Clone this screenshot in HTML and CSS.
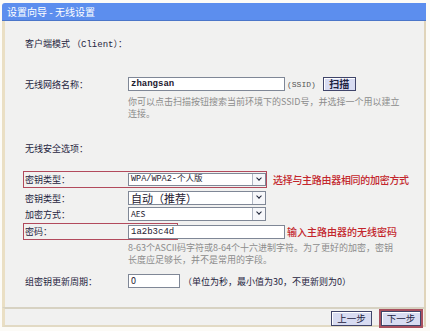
FILE: index.html
```html
<!DOCTYPE html>
<html lang="zh">
<head>
<meta charset="utf-8">
<link rel="stylesheet" href="styles.css">
</head>
<body>
<div class="window">
  <div class="titlebar">设置向导 - 无线设置</div>
  <div class="panel">
    <div class="mode">客户端模式 <span class="mono">（Client）</span>：</div>

    <div class="row r-ssid">
      <div class="label">无线网络名称：</div>
      <div class="field">
        <span class="input w-long mono bold">zhangsan</span>
        <span class="ssid mono">(SSID)</span>
        <span class="btn scan">扫描</span>
      </div>
    </div>
    <div class="help help1">你可以点击扫描按钮搜索当前环境下的SSID号，并选择一个用以建立<br>连接。</div>

    <div class="section">无线安全选项：</div>

    <div class="row r-type">
      <div class="hlbox hl1"></div>
      <div class="label">密钥类型：</div>
      <div class="field">
        <span class="select w-sel mono">WPA/WPA2-个人版<i class="arrow"></i></span>
        <span class="note">选择与主路由器相同的加密方式</span>
      </div>
    </div>
    <div class="row r-sel r-sel1">
      <div class="label">密钥类型：</div>
      <div class="field">
        <span class="select w-sel big">自动（推荐）<i class="arrow"></i></span>
      </div>
    </div>
    <div class="row r-sel r-sel2">
      <div class="label">加密方式：</div>
      <div class="field">
        <span class="select w-sel small">AES<i class="arrow"></i></span>
      </div>
    </div>
    <div class="row r-pass">
      <div class="hlbox hl2"></div>
      <div class="label">密码：</div>
      <div class="field">
        <span class="input w-long mono">1a2b3c4d</span>
        <span class="note note2">输入主路由器的无线密码</span>
      </div>
    </div>
    <div class="help help2">8-63个ASCII码字符或8-64个十六进制字符。为了更好的加密，密钥<br>长度应足够长，并不是常用的字段。</div>

    <div class="row r-period">
      <div class="label">组密钥更新周期：</div>
      <div class="field">
        <span class="input w-short small">0</span>
        <span class="unit">（单位为秒，最小值为30，不更新则为0）</span>
      </div>
    </div>
  </div>
  <div class="footer">
    <span class="btn step">上一步</span>
    <span class="btn step next">下一步</span>
  </div>
</div>
</body>
</html>
```
FILE: styles.css
```css
* { box-sizing: border-box; }
html, body { margin: 0; padding: 0; background: #fcfbf7; }
body {
  width: 430px; height: 331px; overflow: hidden;
  font-family: "Noto Sans CJK SC", "Noto Sans", sans-serif;
  font-size: 9px; color: #1f2540;
}
.window {
  margin: 3px 0 0 2px;
  width: 424px;
}
.titlebar {
  height: 18px;
  background: #5c8eee;
  border-bottom: 1px solid #4b76c9;
  border-radius: 3px 0 0 0;
  color: #fff;
  font-size: 10px;
  line-height: 17px;
  padding-left: 5px;
  white-space: nowrap;
}
.panel {
  background: #f1f1f0;
  border-left: 3px solid #eadfc4;
  border-right: 2px solid #e0d4ba;
  padding: 13px 0 0 20px;
  height: 286px;
  white-space: nowrap;
}
.mono { font-family: "Liberation Mono", "Noto Sans CJK SC", monospace; }
.bold { font-weight: bold; }
.mode { height: 20px; line-height: 20px; }
.mode .mono { font-size: 9px; }
.row { display: flex; align-items: center; position: relative; }
.label { width: 103px; flex: none; }
.field { display: flex; align-items: center; }
.r-ssid { margin-top: 23px; height: 14px; }
.input, .select {
  display: inline-block; height: 14px; line-height: 12px;
  background: #fff; border: 1px solid #7f8796;
  padding: 0 2px; position: relative; color: #1e2030;
  font-size: 9px;
}
.w-long { width: 157px; }
.w-sel { width: 138px; }
.w-short { width: 52px; }
.ssid { color: #555; margin-left: 2px; font-size: 8px; }
.btn {
  display: inline-block; background: #d8dcf2;
  border: 1px solid #40456a; box-shadow: inset 1px 1px 0 #fff;
  text-align: center; color: #1c2240;
}
.scan { width: 33px; height: 14px; line-height: 12px; margin-left: 7px; font-size: 10px; font-weight: bold; }
.help {
  color: #8c8c8c; font-size: 9px; line-height: 12px;
  margin-left: 103px;
}
.help1 { margin-top: 5px; }
.section { margin-top: 19px; height: 20px; line-height: 20px; }
.hlbox {
  position: absolute; left: -2px; top: 0; height: 17px;
  border: 1px solid #b24a5c; pointer-events: none;
}
.hl1 { width: 244px; }
.hl2 { width: 155px; }
.r-type { margin-top: 12px; height: 17px; }
.r-type .select { height: 13px; line-height: 11px; font-size: 8.5px; }
.arrow {
  position: absolute; right: 0; top: 0; width: 13px; height: 100%;
  border-left: 1px solid #b0b6c2; background: #f6f7fa;
}
.arrow::after {
  content: ""; position: absolute; left: 4px; top: 2px; width: 3px; height: 3px;
  border-right: 1.5px solid #1b2236; border-bottom: 1.5px solid #1b2236;
  transform: rotate(45deg);
}
.note { color: #c3262c; font-size: 10px; margin-left: 7px; letter-spacing: -0.3px; font-weight: 500; }
.note2 { margin-left: 2px; letter-spacing: 0; }
.r-sel { height: 14px; }
.r-sel1 { margin-top: 3px; }
.r-sel2 { margin-top: 2px; }
.r-sel1 .select { font-size: 11px; line-height: 12px; }
.r-sel2 .select { font-size: 8px; }
.r-pass { margin-top: 2px; height: 17px; }
.help2 { margin-top: 2px; }
.r-period { margin-top: 8px; height: 14px; }
.unit { margin-left: 3px; }
.footer {
  background: #f1f1f0;
  border-top: 2px solid #d7d2c2;
  border-left: 3px solid #eadfc4;
  border-right: 2px solid #e0d4ba;
  border-bottom: 2px solid #e2dac4;
  height: 20px;
  display: flex; justify-content: flex-end; align-items: flex-start;
  gap: 9px; padding-right: 3px; padding-top: 2px;
}
.step { width: 41px; height: 15px; line-height: 13px; font-size: 9.5px; }
.next { width: 40px; outline: 2px solid #a8505f; }
```
